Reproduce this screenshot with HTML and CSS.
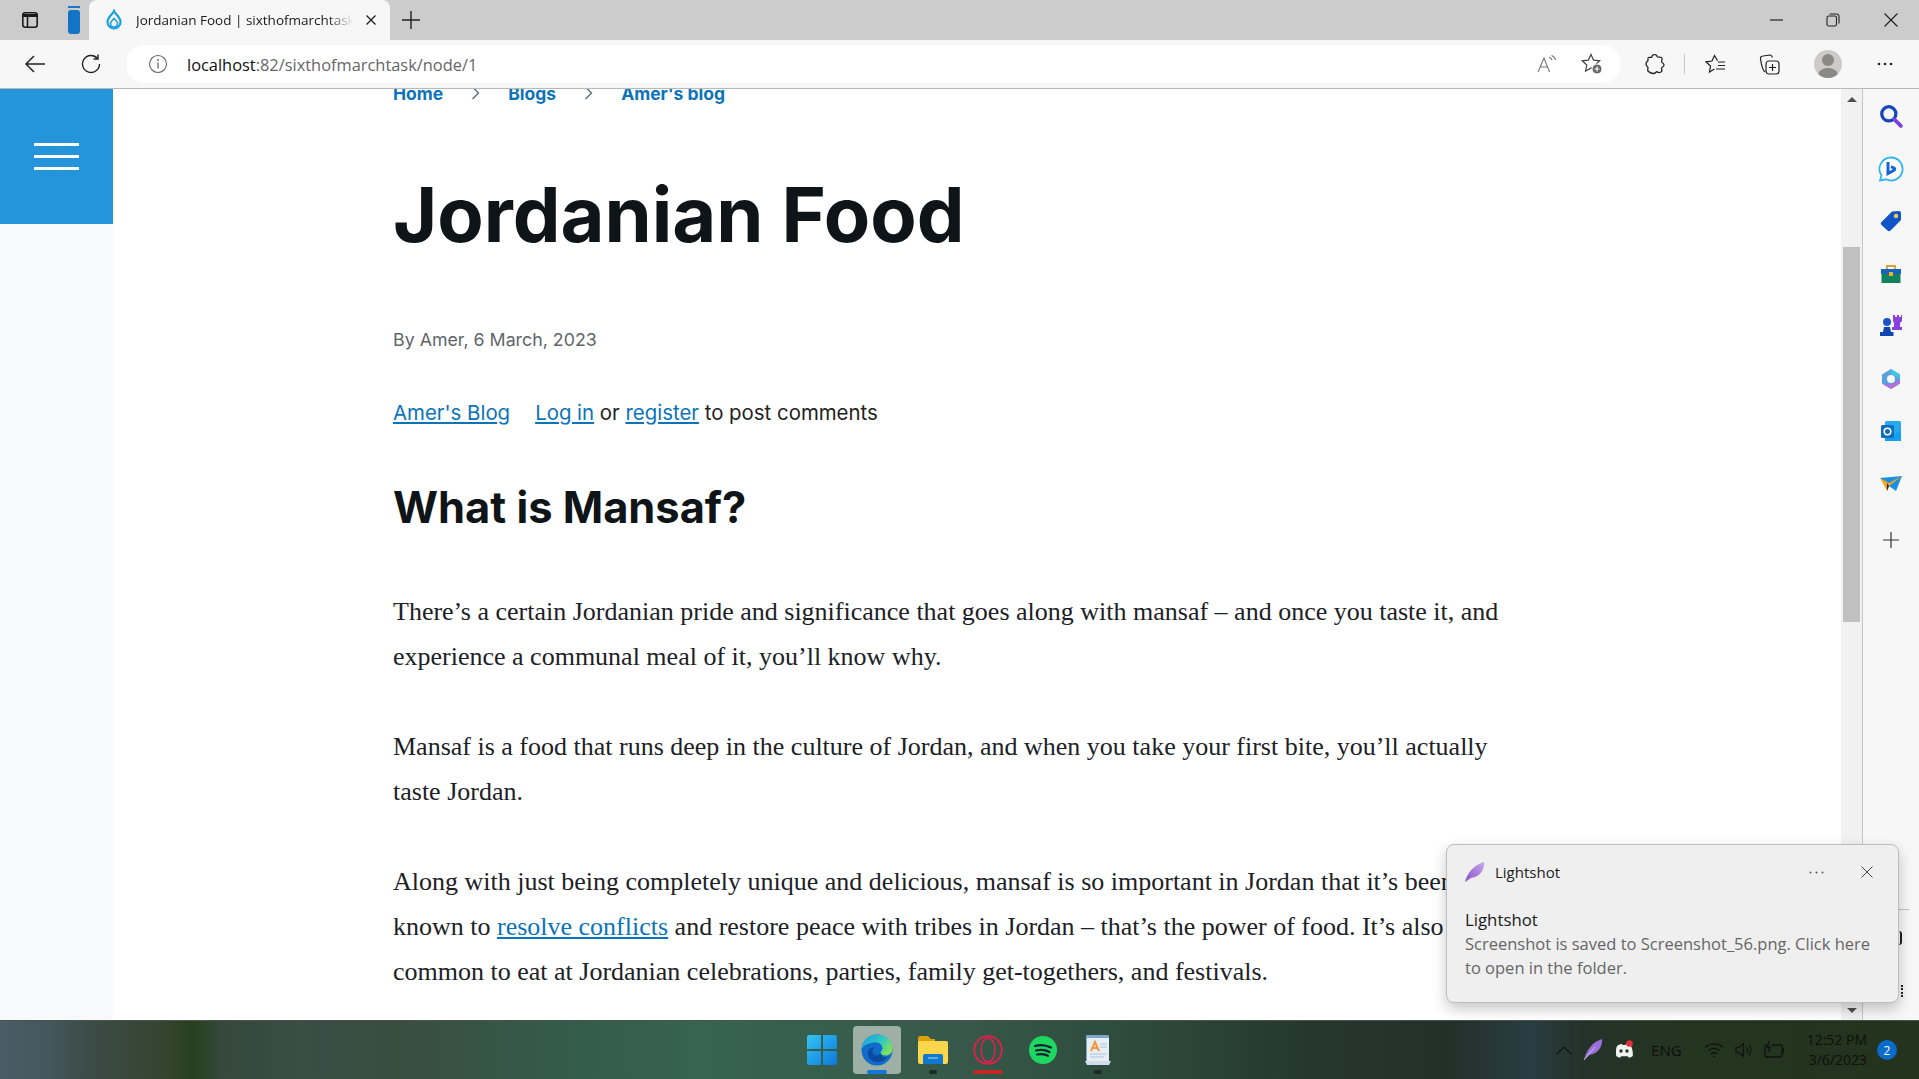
FILE: index.html
```html
<!DOCTYPE html>
<html>
<head>
    <meta charset="utf-8">
    <title>Jordanian Food | sixthofmarchtask</title>
    <link rel="stylesheet" href="styles.css">
</head>
<body>
    <div class="window">
        <!-- tab strip -->
        <div class="tabstrip">
            <div class="tab-tools">
                <svg class="ico" width="18" height="18" viewBox="0 0 18 18" fill="none" stroke="#1a1a1a" stroke-width="1.6"><rect x="1.8" y="1.8" width="14.4" height="14.4" rx="2.5"/><path d="M2 4.500h14" stroke-width="3"/><path d="M6.500 6v10"/></svg>
                <div class="workspace"><span class="workspace-line"></span><span class="workspace-pill"></span></div>
            </div>
            <div class="tab">
                <svg width="18" height="22" viewBox="0 0 18 22" fill="none" stroke="#1a9fe0" stroke-width="2.2"><path d="M9 2c1 3 6.500 6 6.500 11a6.500 6.500 0 0 1-13 0C2.500 8 8 5 9 2z"/><path d="M5.500 14.500c0-2 2.300-3.500 3.500-5 1.200 1.500 3.500 3 3.500 5a3.500 3.500 0 0 1-7 0z" stroke-width="1.600"/></svg>
                <span class="tab-title">Jordanian Food | sixthofmarchtask</span>
                <svg class="tab-x" width="12" height="12" viewBox="0 0 12 12" stroke="#222" stroke-width="1.400"><path d="M1.500 1.500l9 9M10.500 1.500l-9 9"/></svg>
            </div>
            <svg class="newtab" width="18" height="18" viewBox="0 0 18 18" stroke="#222" stroke-width="1.400"><path d="M9 0v18M0 9h18"/></svg>
            <div class="winctl">
                <svg class="win-min" width="14" height="14" viewBox="0 0 14 14" stroke="#222" stroke-width="1.200"><path d="M0 7h13"/></svg>
                <svg width="14" height="14" viewBox="0 0 14 14" fill="none" stroke="#222" stroke-width="1.100"><rect x="1" y="3" width="9.500" height="10" rx="1.800"/><path d="M3.500 1h7a2.500 2.500 0 0 1 2.500 2.500v7"/></svg>
                <svg width="14" height="14" viewBox="0 0 14 14" stroke="#222" stroke-width="1.200"><path d="M.5.500l13 13M13.500.500l-13 13"/></svg>
            </div>
        </div>

        <!-- address bar -->
        <div class="toolbar">
            <svg class="nav-back" width="22" height="20" viewBox="0 0 22 20" fill="none" stroke="#222" stroke-width="1.500"><path d="M21 10H2M10 2l-8 8 8 8"/></svg>
            <svg class="nav-reload" width="20" height="20" viewBox="0 0 20 20" fill="none" stroke="#222" stroke-width="1.400"><path d="M16.500 4.500A8.500 8.500 0 1 0 18.500 10"/><path d="M17 .5v4.500h-4.500"/></svg>
            <div class="omnibox">
                <svg width="20" height="20" viewBox="0 0 20 20" fill="none" stroke="#666" stroke-width="1.100"><circle cx="10" cy="10" r="8.500"/><path d="M10 8.500v6" stroke-width="1.300"/><circle cx="10" cy="6" r=".9" fill="#666" stroke="none"/></svg>
                <span class="url"><span class="url-host">localhost</span>:82/sixthofmarchtask/node/1</span>
                <svg class="omni-read" width="20" height="18" viewBox="0 0 20 18" fill="none" stroke="#777" stroke-width="1.100"><path d="M1 17L7 3l5.500 14M3 12h8"/><path d="M12 2c1.500.5 2.500 1.500 3 3M14.500.5c2 .7 3.500 2.300 4 4.500"/></svg>
                <svg class="omni-star" width="22" height="22" viewBox="0 0 22 22" fill="none" stroke="#444" stroke-width="1.200"><path d="M10 1.500l2.600 5.600 6.100.7-4.500 4.200 1.200 6-5.400-3-5.400 3 1.200-6-4.500-4.200 6.100-.7z"/><circle cx="16" cy="16" r="5" fill="#666" stroke="#fff" stroke-width="1"/><path d="M16 13.500v5M13.500 16h5" stroke="#fff"/></svg>
            </div>
            <div class="tb-right">
                <svg class="tb-ext" width="20" height="22" viewBox="0 0 20 22" fill="none" stroke="#222" stroke-width="1.300"><path d="M7 3.500C7 1 12 1 12 3.500c0 1 3.500.5 4.500 1s.5 3 0 4c-.5 1.500 2.500 1 2.500 3.500s-3 2-2.500 3.500c.5 1.500.5 3-.5 3.500s-3 .5-3.500 0c-1-1.500-1.500 1.500-4 1.500S4 19 3.500 18.500C2 18 3 15.500 3 14.500 3 13 1 14 1 11s2-2.500 2-3.500-.5-2.500.5-3S7 5 7 3.500z"/></svg>
                <span class="tb-div"></span>
                <svg class="tb-fav" width="21" height="20" viewBox="0 0 21 20" fill="none" stroke="#222" stroke-width="1.200"><path d="M12.500 6.800L9.500 1.500 7 7 1 7.800l4.500 4.200L4.500 18l5-3"/><path d="M13 8h7M13 11.500h7M11 15h9"/></svg>
                <svg class="tb-coll" width="21" height="21" viewBox="0 0 21 21" fill="none" stroke="#222" stroke-width="1.200"><path d="M6 18C3 16 2 8 1.500 5c-.3-2 1-3 2.500-3l7-1c1.500 0 2 1 2.500 2.500"/><rect x="7" y="7" width="13" height="13" rx="3"/><path d="M13.500 10v7M10 13.500h7"/></svg>
                <div class="avatar"><span class="avatar-head"></span><span class="avatar-body"></span></div>
                <svg width="16" height="4" viewBox="0 0 16 4" fill="#222"><circle cx="2" cy="2" r="1.300"/><circle cx="8" cy="2" r="1.300"/><circle cx="14" cy="2" r="1.300"/></svg>
            </div>
        </div>

        <!-- page + edge bar -->
        <div class="viewport">
            <aside class="site-rail">
                <div class="burger"><span></span><span></span><span></span></div>
            </aside>
            <main class="page">
                <nav class="crumbs">
                    <a href="#">Home</a>
                    <svg width="9" height="14" viewBox="0 0 9 14" fill="none" stroke="#5a6b7a" stroke-width="1.400"><path d="M1.500 1l6 6-6 6"/></svg>
                    <a href="#">Blogs</a>
                    <svg width="9" height="14" viewBox="0 0 9 14" fill="none" stroke="#5a6b7a" stroke-width="1.400"><path d="M1.500 1l6 6-6 6"/></svg>
                    <a href="#">Amer's blog</a>
                </nav>
                <h1 class="title">Jordanian Food</h1>
                <div class="byline">By Amer, 6 March, 2023</div>
                <div class="links"><a href="#" class="blog-link">Amer's Blog</a><a href="#">Log in</a> or <a href="#">register</a> to post comments</div>
                <h2 class="subtitle">What is Mansaf?</h2>
                <p>There’s a certain Jordanian pride and significance that goes along with mansaf – and once you taste it, and experience a communal meal of it, you’ll know why.</p>
                <p>Mansaf is a food that runs deep in the culture of Jordan, and when you take your first bite, you’ll actually taste Jordan.</p>
                <p>Along with just being completely unique and delicious, mansaf is so important in Jordan that it’s been known to <a href="#">resolve conflicts</a> and restore peace with tribes in Jordan – that’s the power of food. It’s also common to eat at Jordanian celebrations, parties, family get-togethers, and festivals.</p>
            </main>
            <div class="scrollbar">
                <span class="arrow-up"></span>
                <span class="thumb"></span>
                <span class="arrow-down"></span>
            </div>
            <aside class="edgebar">
                <div class="edge-slot"><svg width="24" height="24" viewBox="0 0 22 22" fill="none"><circle cx="9" cy="9" r="6.500" stroke="#1546c0" stroke-width="3"/><path d="M14 14l6 6" stroke="#7a3fe0" stroke-width="3.500" stroke-linecap="round"/></svg></div>
                <div class="edge-slot"><svg width="26" height="26" viewBox="0 0 26 26" fill="none"><path d="M13 1.500a11.500 11.500 0 1 1-5 21.800L2 24.500l1.500-5A11.500 11.500 0 0 1 13 1.500z" stroke="#30b4f0" stroke-width="1.800" fill="#fff"/><path d="M10 6v11.500l6-3.200c1-.6 1-1.800 0-2.300l-3-1.300" stroke="#1565d8" stroke-width="3"/></svg></div>
                <div class="edge-slot"><svg width="22" height="22" viewBox="0 0 22 22"><path d="M1.500 12L12 1.500l7-.5c1.200 0 2 .8 2 2v7L10.500 20.500c-1 1-2 1-3 0L1.500 15c-1-1-1-2 0-3z" fill="#0f55c8"/><circle cx="16" cy="6" r="2.200" fill="#f7c948"/></svg></div>
                <div class="edge-slot"><svg width="22" height="20" viewBox="0 0 22 20"><path d="M7 5V2h8v3" fill="none" stroke="#d8a030" stroke-width="1.800"/><rect x="1" y="5" width="20" height="5" fill="#1565c0"/><rect x="1.500" y="10" width="19" height="9" fill="#138060"/><rect x="9" y="8" width="4" height="4" fill="#eeb030"/></svg></div>
                <div class="edge-slot"><svg width="24" height="24" viewBox="0 0 24 24"><circle cx="8" cy="8" r="4" fill="#1a55c8"/><path d="M5 13h6l1 5h2.500v4H1v-4h3z" fill="#0f45b0"/><path d="M14 1h2v2h2V1h2v2h2V1h1v6l-2 2v4h2v3H13v-3h2V9l-1-2z" fill="#8a3fe0"/></svg></div>
                <div class="edge-slot"><svg width="22" height="24" viewBox="0 0 22 24" fill="none"><path d="M11 2l9 5.500v9L11 22l-9-5.500v-9z" fill="#5a9fe0"/><path d="M11 2l9 5.500v4L11 6.500z" fill="#38c8e8"/><path d="M2 16.500L11 22l9-5.500v-4l-9 5z" fill="#b070d8"/><circle cx="11" cy="12" r="4" fill="#f7f7f7"/></svg></div>
                <div class="edge-slot"><svg width="22" height="22" viewBox="0 0 22 22"><rect x="5" y="1" width="16" height="20" rx="1.500" fill="#28a8ea"/><path d="M5 12l8 4 8-6v11H5z" fill="#14a0f0"/><rect x="1" y="5" width="13" height="13" rx="1.500" fill="#0f6cbd"/><circle cx="7.500" cy="11.500" r="3.300" fill="none" stroke="#fff" stroke-width="1.600"/></svg></div>
                <div class="edge-slot"><svg width="24" height="18" viewBox="0 0 24 18"><path d="M1 3l22-2-6 15-7-5z" fill="#1b8fe0"/><path d="M1 3l9 5 13-7-13 10-2 5z" fill="#f0a820"/><path d="M8 8l2 3-2 5z" fill="#223"/></svg></div>
                <div class="edge-slot edge-add"><svg width="16" height="16" viewBox="0 0 16 16" stroke="#333" stroke-width="1.200"><path d="M8 0v16M0 8h16"/></svg></div>
            </aside>
        </div>

        <!-- windows taskbar -->
        <footer class="taskbar">
            <div class="task-apps">
                <div class="app"><svg width="30" height="30" viewBox="0 0 30 30"><defs><linearGradient id="wg" x1="0" y1="0" x2="1" y2="1"><stop offset="0" stop-color="#35c5f5"/><stop offset="1" stop-color="#0a78d8"/></linearGradient></defs><path d="M0 2a2 2 0 0 1 2-2h12v14H0zM16 0h12a2 2 0 0 1 2 2v12H16zM0 16h14v14H2a2 2 0 0 1-2-2zM16 16h14v12a2 2 0 0 1-2 2H16z" fill="url(#wg)"/></svg></div>
                <div class="app app-active">
                    <svg width="32" height="32" viewBox="0 0 32 32"><defs><linearGradient id="eg" x1="0" y1="0" x2="1" y2=".6"><stop offset="0" stop-color="#1a9be0"/><stop offset=".6" stop-color="#2fc8c0"/><stop offset="1" stop-color="#7fe060"/></linearGradient></defs><circle cx="16" cy="16" r="15.500" fill="#0f6cc8"/><path d="M.5 15C1.500 6 8 .5 16 .5 25 .5 31.500 7 31.500 15c0 4-3 6.500-7 6.500-3 0-5-1-5-2.500 0-2 2-2 2-5 0-3-3-5.500-6.500-5.500C8 8.500 3 11 .5 15z" fill="url(#eg)"/><path d="M19.500 19c-1 2-4 3-6 2-3-1.500-2.500-6 .5-7.500-5-.5-8 3-7 8 1 4 6 7 11 6.500 4-.3 7-2.500 9-5.500-2.500 1.500-6 .5-7.500-3.500z" fill="#0a4aa0"/></svg>
                    <span class="app-dash"></span>
                </div>
                <div class="app"><svg width="30" height="28" viewBox="0 0 30 28"><path d="M0 2a2 2 0 0 1 2-2h8l3 3h4v3H0z" fill="#d9a010"/><path d="M0 5h28a2 2 0 0 1 2 2v19a2 2 0 0 1-2 2H2a2 2 0 0 1-2-2z" fill="#fdd64c"/><path d="M5 20a2 2 0 0 1 2-2h16a2 2 0 0 1 2 2v8H5z" fill="#0f78d0"/><path d="M10 22h10" stroke="#bde" stroke-width="1"/></svg><span class="app-dot"></span></div>
                <div class="app"><svg width="30" height="30" viewBox="0 0 30 30" fill="none" stroke="#e0204a"><circle cx="15" cy="15" r="13.800" stroke-width="1.800"/><ellipse cx="15" cy="15" rx="7" ry="12" stroke-width="1.500"/></svg><span class="app-redbar"></span></div>
                <div class="app"><svg width="28" height="28" viewBox="0 0 28 28" fill="none"><circle cx="14" cy="14" r="14" fill="#1ed760"/><path d="M6 10c5-1.500 11-1 16 1.500M7 14.500c4.500-1 9.500-.7 13.500 1.500M8 18.500c4-.8 8-.5 11 1.200" stroke="#123" stroke-width="2.200" stroke-linecap="round"/></svg></div>
                <div class="app"><svg width="26" height="30" viewBox="0 0 26 30"><rect x="1" y="0" width="23" height="28" rx="1" fill="#7fa6c8"/><rect x="2" y="3" width="22" height="24" fill="#e8eef6"/><path d="M6 16l4-9 4 9M7.500 13h5" stroke="#f0983a" stroke-width="2" fill="none"/><path d="M15 9h7M15 12h7M5 19h17M5 22h14" stroke="#a8c4de"/><path d="M0 26h26l-2 4H2z" fill="#cfdcec"/></svg><span class="app-dot"></span></div>
            </div>
            <div class="tray">
                <svg width="16" height="9" viewBox="0 0 16 9" fill="none" stroke="#111" stroke-width="1.200"><path d="M.5 8.500L8 1l7.500 7.500"/></svg>
                <svg width="20" height="22" viewBox="0 0 20 22"><path d="M1 21C3 12 9 3 19 0c1 6-3 13-9 15l-4 1z" fill="#9a70d8"/><path d="M1 21L12 8" stroke="#ddd" stroke-width=".8"/></svg>
                <svg class="tray-discord" width="20" height="20" viewBox="0 0 20 20"><path d="M3 6c2-1.500 4-2 5-2l.5 1h3l.5-1c1 0 3 .5 5 2 1.500 3 2 6.500 1.800 10-1.500 1-3 1.600-4 1.800l-1-1.500H7.200l-1 1.500c-1-.2-2.500-.8-4-1.800C2 12.500 1.500 9 3 6z" fill="#f2f2f2"/><circle cx="7" cy="11" r="1.700" fill="#28372c"/><circle cx="13" cy="11" r="1.700" fill="#28372c"/><circle cx="15.500" cy="3.500" r="3.300" fill="#e03030"/></svg>
                <span class="tray-lang">ENG</span>
                <svg width="20" height="16" viewBox="0 0 20 16" fill="none" stroke="#111" stroke-width="1.300"><path d="M1 5.500c5-4.800 13-4.800 18 0M4 8.800c3.500-3.200 8.500-3.200 12 0M7 12c1.800-1.500 4.200-1.500 6 0"/><circle cx="10" cy="14.500" r="1" fill="#111" stroke="none"/></svg>
                <svg width="18" height="16" viewBox="0 0 18 16" fill="none" stroke="#111" stroke-width="1.200"><path d="M1 5.500h3L8.500 1.500v13L4 10.500H1zM11.500 5c1.300 1.700 1.300 4.300 0 6M14 3c2.300 3 2.300 7 0 10"/></svg>
                <svg width="20" height="18" viewBox="0 0 20 18" fill="none" stroke="#111" stroke-width="1.300"><path d="M8 4h8.500A1.500 1.500 0 0 1 18 5.500v9a1.500 1.500 0 0 1-1.500 1.500h-14A1.500 1.500 0 0 1 1 14.500v-9A1.500 1.500 0 0 1 2.500 4"/><path d="M18.500 8h1v3h-1M5.500 0L3 6h3l-1.500 5"/></svg>
                <div class="clock"><span>12:52 PM</span><span>3/6/2023</span></div>
                <span class="badge">2</span>
            </div>
        </footer>

        <!-- bits of the edge bar that stick out beside the toast -->
        <span class="peek-line"></span>
        <span class="peek-paren"></span>
        <span class="peek-s"></span>

        <!-- lightshot toast -->
        <div class="toast">
            <div class="toast-head">
                <svg width="20" height="20" viewBox="0 0 20 20"><defs><linearGradient id="fg" x1="0" y1="1" x2="1" y2="0"><stop offset="0" stop-color="#8a4fc8"/><stop offset="1" stop-color="#c8a8ec"/></linearGradient></defs><path d="M0 20C2 11 9 3 19 0c1 6-3 13-9 15l-4 1z" fill="url(#fg)"/></svg>
                <span class="toast-app">Lightshot</span>
                <svg class="toast-dots" width="15" height="3" viewBox="0 0 15 3" fill="#555"><circle cx="1.500" cy="1.500" r="1"/><circle cx="7.500" cy="1.500" r="1"/><circle cx="13.500" cy="1.500" r="1"/></svg>
                <svg class="toast-x" width="12" height="12" viewBox="0 0 12 12" stroke="#444" stroke-width="1"><path d="M.5.500l11 11M11.500.500l-11 11"/></svg>
            </div>
            <div class="toast-title">Lightshot</div>
            <div class="toast-text">Screenshot is saved to Screenshot_56.png. Click here to open in the folder.</div>
        </div>
    </div>
</body>
</html>
```

FILE: styles.css
```css
html, body {
    margin: 0;
    height: 100%;
    overflow: hidden;
}

.window {
    position: relative;
    display: flex;
    flex-direction: column;
    height: 100vh;
    font-family: "Open Sans", sans-serif;
    background: #fff;
}

svg {
    display: block;
    flex: none;
}

/* tab strip */
.tabstrip {
    display: flex;
    align-items: center;
    height: 40px;
    background: #cccccc;
    flex: none;
}

.tab-tools {
    display: flex;
    align-items: center;
    width: 89px;
    padding-left: 21px;
    box-sizing: border-box;
}

.workspace {
    display: flex;
    flex-direction: column;
    gap: 2px;
    margin-left: 29px;
    width: 12px;
}

.workspace-line {
    height: 2px;
    background: #1a78c8;
}

.workspace-pill {
    height: 24px;
    background: #1274c4;
    border-radius: 3px;
}

.tab {
    display: flex;
    align-items: center;
    align-self: stretch;
    width: 301px;
    padding-left: 16px;
    box-sizing: border-box;
    background: #f7f7f7;
    border-radius: 8px 8px 0 0;
}

.tab-title {
    margin-left: 13px;
    width: 217px;
    font-size: 13.500px;
    color: #1a1a1a;
    white-space: nowrap;
    overflow: hidden;
    -webkit-mask-image: linear-gradient(to right, #000 88%, transparent);
    mask-image: linear-gradient(to right, #000 88%, transparent);
}

.tab-x {
    margin-left: 12px;
}

.newtab {
    margin-left: 12px;
}

.winctl {
    display: flex;
    align-items: center;
    gap: 44px;
    margin-left: auto;
    margin-right: 21px;
}

.win-min {
    margin-right: -2px;
}

/* toolbar */
.toolbar {
    display: flex;
    align-items: center;
    height: 48px;
    background: #f7f7f7;
    flex: none;
}

.nav-back {
    margin-left: 24px;
}

.nav-reload {
    margin-left: 35px;
}

.omnibox {
    display: flex;
    align-items: center;
    width: 1495px;
    height: 38px;
    margin-left: 25px;
    padding-left: 22px;
    box-sizing: border-box;
    background: #fff;
    border-radius: 19px;
}

.url {
    margin-left: 19px;
    font-size: 16.400px;
    color: #666;
}

.url-host {
    color: #111;
}

.omni-read {
    margin-left: auto;
}

.omni-star {
    margin-left: 24px;
    margin-right: 18px;
}

.tb-right {
    display: flex;
    align-items: center;
    margin-left: 24px;
    gap: 19px;
}

.tb-div {
    width: 1px;
    height: 20px;
    background: #c8c8c8;
}

.tb-fav {
    margin-left: 1px;
}

.tb-coll {
    margin-left: 14px;
}

.avatar {
    position: relative;
    width: 28px;
    height: 28px;
    margin-left: 15px;
    margin-right: 16px;
    border-radius: 50%;
    background: #cdcbc8;
    overflow: hidden;
}

.avatar-head {
    position: absolute;
    left: 8px;
    top: 4px;
    width: 12px;
    height: 12px;
    border-radius: 50%;
    background: #8b8985;
}

.avatar-body {
    position: absolute;
    left: 4px;
    top: 18px;
    width: 20px;
    height: 14px;
    border-radius: 50%;
    background: #8b8985;
}

/* page */
.viewport {
    display: flex;
    flex: 1;
    min-height: 0;
    border-top: 1px solid #b8b8b8;
}

.site-rail {
    width: 113px;
    flex: none;
    background: #f7f9fa;
}

.burger {
    display: flex;
    flex-direction: column;
    justify-content: center;
    align-items: center;
    gap: 9px;
    height: 135px;
    background: #2494db;
}

.burger span {
    width: 45px;
    height: 3px;
    background: #fff;
}

.page {
    flex: 1;
    min-width: 0;
    padding-left: 280px;
    padding-right: 328px;
    overflow: hidden;
    color: #0f1418;
    font-family: "Liberation Serif", serif;
}

.page a {
    color: #0b73b9;
}

.crumbs {
    display: flex;
    align-items: center;
    height: 8px;
    font-family: Inter, sans-serif;
    font-size: 17.500px;
    font-weight: 700;
}

.crumbs a {
    text-decoration: none;
}

.crumbs svg {
    margin: 0 28px;
}

.title {
    margin: 78px 0 0;
    font-family: Inter, sans-serif;
    font-size: 75.800px;
    line-height: 80px;
    font-weight: 700;
    white-space: nowrap;
}

.byline {
    margin-top: 73px;
    font-family: Inter, sans-serif;
    font-size: 17.800px;
    line-height: 24px;
    color: #5f656b;
}

.links {
    margin-top: 49px;
    font-family: Inter, sans-serif;
    font-size: 20.400px;
    line-height: 24px;
    color: #222;
}

.blog-link {
    margin-right: 25px;
}

.subtitle {
    margin: 56px 0 56px;
    font-family: Inter, sans-serif;
    font-size: 43.400px;
    line-height: 52px;
    font-weight: 700;
}

.page p {
    margin: 45px 0 0;
    font-size: 26px;
    line-height: 45px;
    color: #1c2126;
}

/* browser scrollbar */
.scrollbar {
    position: relative;
    display: flex;
    flex-direction: column;
    align-items: center;
    width: 21px;
    flex: none;
    background: #f1f1f1;
}

.arrow-up {
    margin-top: 8px;
    border: 5px solid transparent;
    border-top: 0;
    border-bottom: 5px solid #505050;
}

.thumb {
    width: 17px;
    height: 375px;
    margin-top: 145px;
    background: #c0c0c0;
}

.arrow-down {
    margin-top: auto;
    margin-bottom: 7px;
    border: 5px solid transparent;
    border-bottom: 0;
    border-top: 5px solid #505050;
}

.edgebar {
    display: flex;
    flex-direction: column;
    width: 57px;
    flex: none;
    padding-top: 1px;
    box-sizing: border-box;
    background: #f7f7f7;
    border-left: 1px solid #c4c4c4;
}

.edge-slot {
    display: flex;
    align-items: center;
    justify-content: center;
    height: 52.500px;
}

.edge-add {
    margin-top: 4px;
}

/* taskbar */
.taskbar {
    position: relative;
    display: flex;
    align-items: center;
    justify-content: center;
    height: 59px;
    flex: none;
    background: linear-gradient(to right, #4a5d66 0, #45565c 2.600%, #3c4c48 4.500%, #33452f 8.500%, #28401f 10%, #35483a 11.500%, #3a4d46 15.600%, #3a4e3e 20.800%, #345a4a 28.600%, #366450 36.500%, #37584a 50%, #2d4a3a 59.400%, #26382e 68%, #23302a 75.500%, #2a3d42 79.700%, #24332a 82.300%, #23351f 88%, #24331e 100%);
    border-top: 1px solid #4a524c;
    box-sizing: border-box;
}

.task-apps {
    display: flex;
    align-items: center;
}

.app {
    position: relative;
    display: flex;
    align-items: center;
    justify-content: center;
    width: 55px;
    height: 48px;
}

.app-active {
    width: 48px;
    margin: 0 4px;
    background: #9eafa6;
    border-radius: 4px;
}

.app-dash,
.app-dot,
.app-redbar {
    position: absolute;
    bottom: 0;
    left: 50%;
    height: 4px;
    transform: translateX(-50%);
    border-radius: 2px;
}

.app-dash {
    width: 20px;
    background: #0f78d8;
}

.app-dot {
    width: 8px;
    background: #1d2a22;
}

.app-redbar {
    width: 30px;
    background: #c02a20;
}

.tray {
    position: absolute;
    right: 22px;
    top: 0;
    bottom: 0;
    display: flex;
    align-items: center;
    gap: 11px;
}

.tray-lang {
    margin: 0 11px 0 6px;
    font-size: 15px;
    color: #0c0f0c;
}

.clock {
    display: flex;
    flex-direction: column;
    align-items: flex-end;
    margin-left: 12px;
    font-size: 14px;
    line-height: 20px;
    color: #0c0f0c;
}

.badge {
    display: flex;
    align-items: center;
    justify-content: center;
    width: 20px;
    height: 20px;
    margin-left: -1px;
    border-radius: 50%;
    background: #0a6cc8;
    color: #fff;
    font-size: 12px;
}

/* edge bar bits beside the toast */
.peek-line {
    position: absolute;
    left: 1899px;
    top: 909px;
    width: 10px;
    height: 1px;
    background: #c0c0c0;
}

.peek-paren {
    position: absolute;
    left: 1897px;
    top: 931px;
    width: 3px;
    height: 14px;
    border-right: 2px solid #222;
    border-radius: 0 3px 3px 0;
}

.peek-s {
    position: absolute;
    left: 1898px;
    top: 985px;
    width: 3px;
    height: 12px;
    border-right: 2px dotted #222;
}

/* toast */
.toast {
    position: absolute;
    left: 1446px;
    top: 844px;
    width: 453px;
    height: 159px;
    padding: 0 20px 0 18px;
    box-sizing: border-box;
    background: #efefef;
    border: 1px solid #bdbdbd;
    border-radius: 8px;
    box-shadow: 0 6px 14px rgba(0, 0, 0, 0.22);
}

.toast-head {
    display: flex;
    align-items: center;
    height: 54px;
}

.toast-app {
    margin-left: 10px;
    font-size: 15px;
    color: #222;
}

.toast-dots {
    margin-left: auto;
    margin-right: 37px;
}

.toast-x {
    margin-right: 5px;
}

.toast-title {
    margin-top: 9px;
    font-size: 16.800px;
    line-height: 24px;
    color: #1a1a1a;
}

.toast-text {
    font-size: 16.500px;
    line-height: 24px;
    color: #666;
}
```
